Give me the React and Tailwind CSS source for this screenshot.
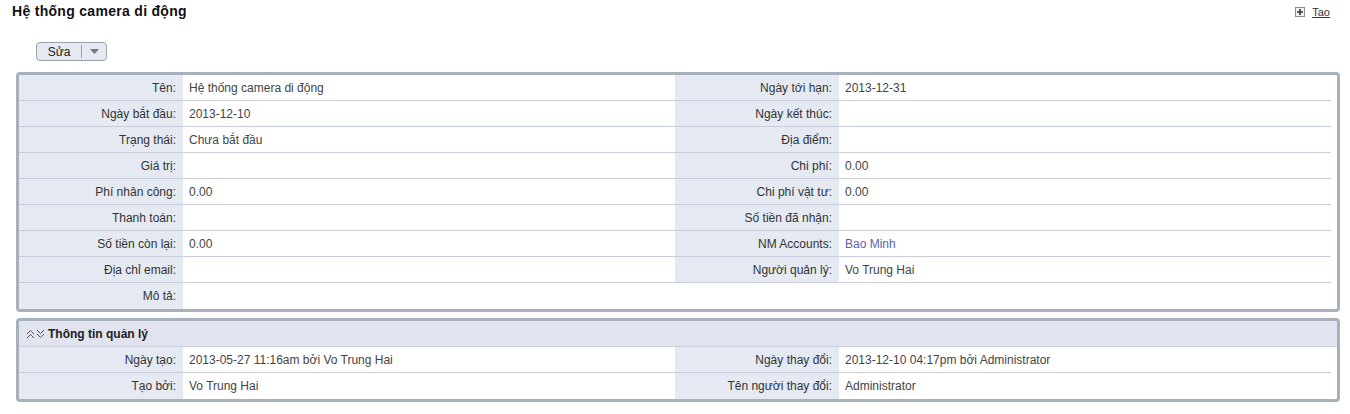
import React from "react";

const font = { fontFamily: '"Liberation Sans", Arial, sans-serif' };

const mainRows = [
  ["Tên:", "Hệ thống camera di động", "Ngày tới hạn:", "2013-12-31"],
  ["Ngày bắt đầu:", "2013-12-10", "Ngày kết thúc:", ""],
  ["Trạng thái:", "Chưa bắt đầu", "Địa điểm:", ""],
  ["Giá trị:", "", "Chi phí:", "0.00"],
  ["Phí nhân công:", "0.00", "Chi phí vật tư:", "0.00"],
  ["Thanh toán:", "", "Số tiền đã nhận:", ""],
  ["Số tiền còn lại:", "0.00", "NM Accounts:", "Bao Minh"],
  ["Địa chỉ email:", "", "Người quản lý:", "Vo Trung Hai"],
];

const adminRows = [
  ["Ngày tạo:", "2013-05-27 11:16am bởi Vo Trung Hai", "Ngày thay đổi:", "2013-12-10 04:17pm bởi Administrator"],
  ["Tạo bởi:", "Vo Trung Hai", "Tên người thay đổi:", "Administrator"],
];

const Label = ({ children }) => (
  <div className="bg-[#e4e9f2] text-right pr-[7px] h-full flex items-center justify-end text-[#333]">
    {children}
  </div>
);

const Value = ({ children, link }) => (
  <div className={`pl-[6px] h-full flex items-center ${link ? "text-[#5b62ae]" : "text-[#444]"}`}>
    {children}
  </div>
);

const Row = ({ row, last }) => (
  <div
    className={`grid grid-cols-[1fr_3fr_1fr_3fr] h-[26px] mr-[6px] ${
      last ? "" : "border-b border-[#c9cddc]"
    }`}
  >
    <Label>{row[0]}</Label>
    <Value>{row[1]}</Value>
    <Label>{row[2]}</Label>
    <Value link={row[2] === "NM Accounts:"}>{row[3]}</Value>
  </div>
);

const PlusBox = () => (
  <svg width="10" height="10" viewBox="0 0 10 10">
    <rect x="0.5" y="0.5" width="9" height="9" fill="#f0f0f0" stroke="#8a8a8a" />
    <path d="M2 5h6M5 2v6" stroke="#333" strokeWidth="1.6" />
  </svg>
);

const Chevrons = () => (
  <span className="flex items-center gap-[1px] mr-[3px]">
    <svg width="9" height="10" viewBox="0 0 9 10">
      <path d="M1 5l3.5-3.5 3.5 3.5M1 9l3.5-3.5 3.5 3.5" stroke="#555" strokeWidth="1" fill="none" />
    </svg>
    <svg width="9" height="10" viewBox="0 0 9 10">
      <path d="M1 1l3.5 3.5 3.5-3.5M1 5l3.5 3.5 3.5-3.5" stroke="#555" strokeWidth="1" fill="none" />
    </svg>
  </span>
);

export default function App() {
  return (
    <div className="w-[1350px] h-[414px] bg-white text-[12px] overflow-hidden" style={font}>
      <div className="flex items-center justify-between h-[22px] pl-[12px] pr-[20px]">
        <div className="font-bold text-[14px] tracking-[0.3px] text-[#111]">Hệ thống camera di động</div>
        <div className="flex items-center gap-[7px] text-[11px] pt-[2px]">
          <PlusBox />
          <span className="underline text-[#333]">Tao</span>
        </div>
      </div>

      <div className="pl-[36px] mt-[20px]">
        <div className="inline-flex items-center h-[19px] w-[71px] rounded-[4px] border border-[#9aa3ad] bg-[#e6e9ef]">
          <span className="w-[44px] text-center text-[#222]">Sửa</span>
          <span className="w-px h-[13px] bg-[#9aa3ad]" />
          <span className="flex-1 flex justify-center">
            <svg width="9" height="5" viewBox="0 0 9 5">
              <path d="M0 0h9L4.5 5z" fill="#777" />
            </svg>
          </span>
        </div>
      </div>

      <div className="ml-4 mr-[10px] mt-[11px] border-[3px] border-[#a7b1bb] rounded-[4px] bg-white">
        {mainRows.map((r, i) => (
          <Row key={i} row={r} />
        ))}
        <div className="grid grid-cols-[1fr_7fr] h-[26px] mr-[6px]">
          <div className="bg-[#e4e9f2] pr-[7px] h-full flex items-center justify-end text-[#333]">Mô tả:</div>
          <div />
        </div>
      </div>

      <div className="ml-4 mr-[10px] mt-[6px] border-[3px] border-[#a7b1bb] rounded-[4px] bg-white">
        <div className="h-[26px] bg-[#e1e4ee] border-b border-[#c9cddc] flex items-center pl-[7px] font-bold text-[#222] text-[12px]">
          <Chevrons />
          Thông tin quản lý
        </div>
        {adminRows.map((r, i) => (
          <Row key={i} row={r} last={i === adminRows.length - 1} />
        ))}
      </div>
    </div>
  );
}
